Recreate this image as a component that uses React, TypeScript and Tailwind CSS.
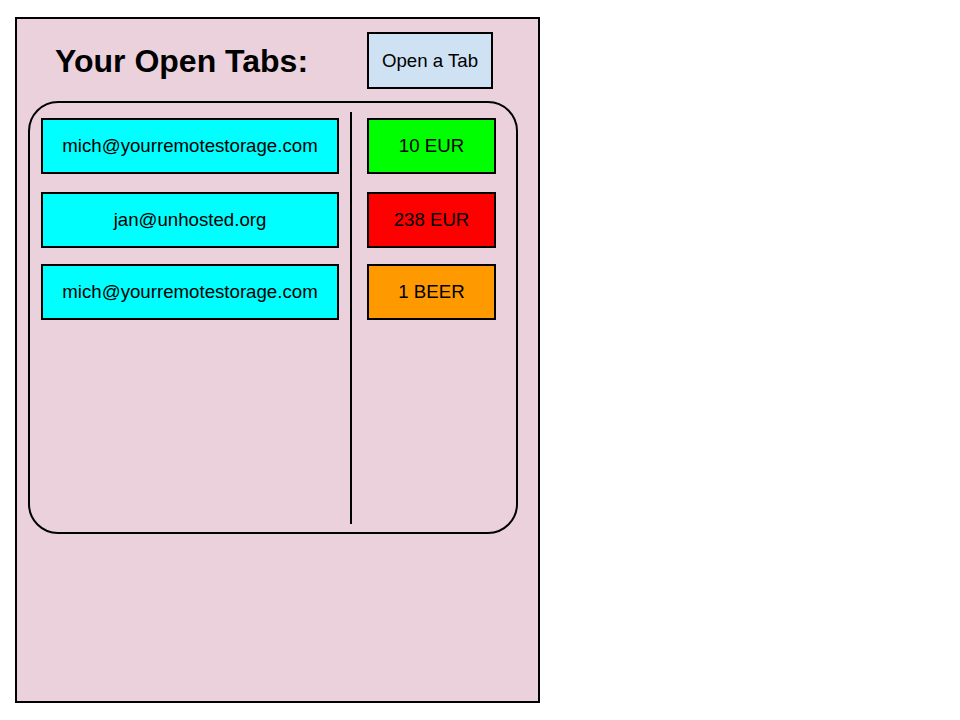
import React from "react";

const emails = [
  "mich@yourremotestorage.com",
  "jan@unhosted.org",
  "mich@yourremotestorage.com",
];

const amounts = [
  { label: "10 EUR", bg: "bg-[#00ff00]" },
  { label: "238 EUR", bg: "bg-[#ff0000]" },
  { label: "1 BEER", bg: "bg-[#ff9900]" },
];

export default function App() {
  return (
    <div
      className="w-[960px] h-[720px] bg-white overflow-hidden pt-[17px] pl-[15px] text-black"
      style={{ fontFamily: '"Liberation Sans", Arial, sans-serif' }}
    >
      <div className="w-[525px] h-[686px] border-2 border-black bg-[#ead1dc] box-border">
        <div className="flex items-center pt-[13px] h-[70px] box-border">
          <h1 className="ml-[38px] text-[32px] font-bold leading-none w-[312px]">
            Your Open Tabs:
          </h1>
          <div className="w-[126px] h-[57px] border-2 border-black bg-[#cfe2f3] flex items-center justify-center text-[18.67px] box-border">
            Open a Tab
          </div>
        </div>
        <div className="ml-[11px] mt-[12px] w-[490px] h-[433px] border-2 border-black rounded-[30px] box-border flex">
          <div className="ml-[11px] pt-[15px] flex flex-col w-[298px]">
            {emails.map((e, i) => (
              <div
                key={i}
                className={`h-[56px] border-2 border-black bg-[#00ffff] flex items-center justify-center text-[18.67px] box-border ${
                  i === 0 ? "" : i === 1 ? "mt-[18px]" : "mt-[16px]"
                }`}
              >
                {e}
              </div>
            ))}
          </div>
          <div className="ml-[11px] mt-[9px] w-[2px] h-[412px] bg-black" />
          <div className="ml-[15px] pt-[15px] flex flex-col w-[129px]">
            {amounts.map((a, i) => (
              <div
                key={i}
                className={`h-[56px] border-2 border-black ${a.bg} flex items-center justify-center text-[18.67px] box-border ${
                  i === 0 ? "" : i === 1 ? "mt-[18px]" : "mt-[16px]"
                }`}
              >
                {a.label}
              </div>
            ))}
          </div>
        </div>
      </div>
    </div>
  );
}
